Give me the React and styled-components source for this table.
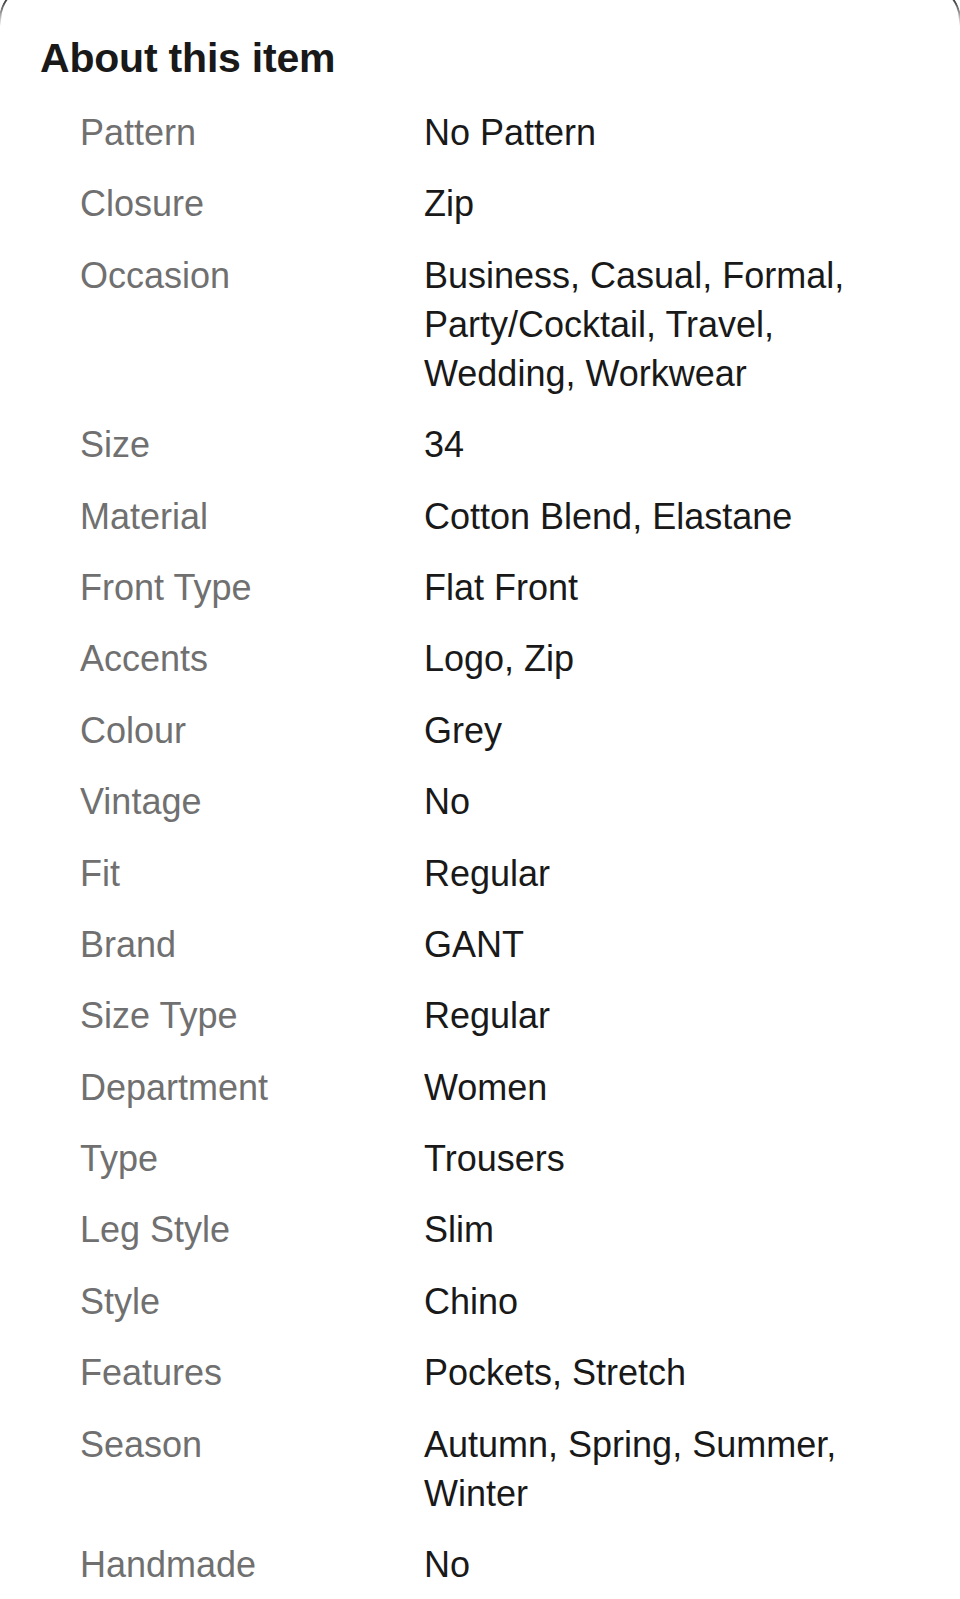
import React from "react";
import styled, { createGlobalStyle } from "styled-components";

const GlobalStyle = createGlobalStyle`
  html, body {
    margin: 0;
    padding: 0;
    background: #ffffff;
  }
  body {
    font-family: "Liberation Sans", Arial, sans-serif;
    color: #191919;
    -webkit-font-smoothing: antialiased;
  }
`;

const specs = [
  ["Pattern", "No Pattern"],
  ["Closure", "Zip"],
  ["Occasion", "Business, Casual, Formal, Party/Cocktail, Travel, Wedding, Workwear"],
  ["Size", "34"],
  ["Material", "Cotton Blend, Elastane"],
  ["Front Type", "Flat Front"],
  ["Accents", "Logo, Zip"],
  ["Colour", "Grey"],
  ["Vintage", "No"],
  ["Fit", "Regular"],
  ["Brand", "GANT"],
  ["Size Type", "Regular"],
  ["Department", "Women"],
  ["Type", "Trousers"],
  ["Leg Style", "Slim"],
  ["Style", "Chino"],
  ["Features", "Pockets, Stretch"],
  ["Season", "Autumn, Spring, Summer, Winter"],
  ["Handmade", "No"],
];

const App = () => {
  return (
    <Sheet>
      <GlobalStyle />
      <Title>About this item</Title>
      <SpecList>
        {specs.map(([label, value]) => (
          <React.Fragment key={label}>
            <Label>{label}</Label>
            <Value>{value}</Value>
          </React.Fragment>
        ))}
      </SpecList>
    </Sheet>
  );
};

export default App;

const Sheet = styled.section`
  position: relative;
  width: 960px;
  min-height: 1599px;
  box-sizing: border-box;
  padding: 33px 60px 0 40px;
  background: #ffffff;
  overflow: hidden;

  /* edge of the rounded sheet peeking in at the top corners */
  &::before {
    content: "";
    position: absolute;
    top: -16px;
    left: -1px;
    right: -1px;
    height: 40px;
    border: 2px solid #4a4a4a;
    border-bottom: 0;
    border-radius: 36px 36px 0 0;
    -webkit-mask-image: linear-gradient(to bottom, #000 45%, transparent);
    mask-image: linear-gradient(to bottom, #000 45%, transparent);
  }
`;

const Title = styled.h2`
  margin: 0 0 25px 0;
  font-size: 41px;
  line-height: 50px;
  font-weight: 700;
  letter-spacing: -0.2px;
  color: #191919;
`;

const SpecList = styled.dl`
  display: grid;
  grid-template-columns: 344px 1fr;
  row-gap: 22.4px;
  margin: 0 0 0 40px;
  padding: 0;
`;

const Label = styled.dt`
  margin: 0;
  font-size: 36px;
  line-height: 49px;
  color: #707070;
`;

const Value = styled.dd`
  margin: 0;
  font-size: 36px;
  line-height: 49px;
  color: #191919;
`;
